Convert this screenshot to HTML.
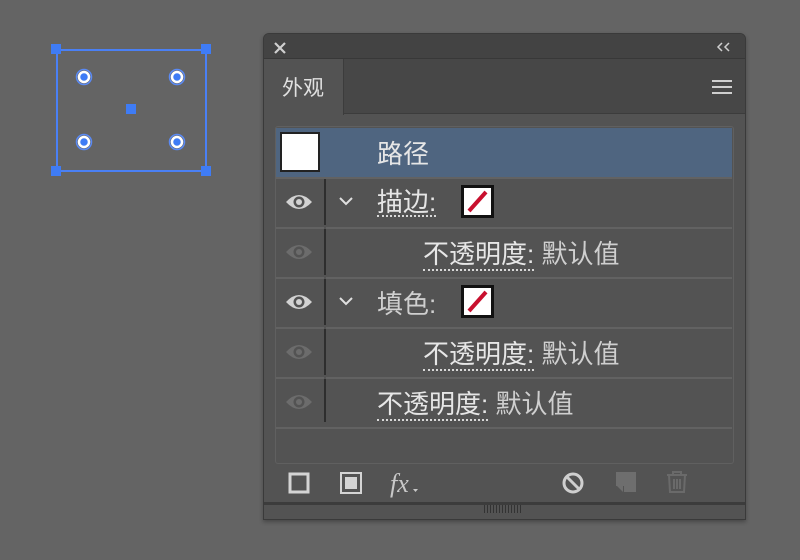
<!DOCTYPE html>
<html><head><meta charset="utf-8"><style>
*{margin:0;padding:0;box-sizing:border-box}
body{width:800px;height:560px;background:#646464;position:relative;overflow:hidden;font-family:"Liberation Sans","Noto Sans CJK SC",sans-serif}
.a{position:absolute}
.t{position:absolute;font-size:26px;color:#e6e6e6;line-height:30px;white-space:nowrap}
.u{border-bottom:2px dotted #d8d8d8;line-height:26px}
.v{color:#cfcfcf}
.row{position:absolute;left:276px;width:456px;height:50px;border-top:2px solid #626262}
.sw{position:absolute;left:461px;width:33px;height:33px;background:#111;padding:3px}
.sw div{width:27px;height:27px;background:#fff;position:relative;overflow:hidden}
</style></head><body>
<div class="a" style="left:56px;top:49px;width:151px;height:123px;border:2px solid #4a80f5"></div>
<div class="a" style="left:51px;top:44px;width:10px;height:10px;background:#3f7cf5"></div>
<div class="a" style="left:201px;top:44px;width:10px;height:10px;background:#3f7cf5"></div>
<div class="a" style="left:51px;top:166px;width:10px;height:10px;background:#3f7cf5"></div>
<div class="a" style="left:201px;top:166px;width:10px;height:10px;background:#3f7cf5"></div>
<div class="a" style="left:126px;top:104px;width:10px;height:10px;background:#3f7cf5"></div>
<svg class="a" style="left:0;top:0" width="230" height="180">
<g fill="none" stroke="#5a8af5" stroke-width="1.5"><circle cx="84" cy="77" r="7.5"/><circle cx="177" cy="77" r="7.5"/><circle cx="84" cy="142" r="7.5"/><circle cx="177" cy="142" r="7.5"/></g>
<g fill="#3f7cf5" stroke="#fff" stroke-width="2.5">
<circle cx="84" cy="77" r="5"/><circle cx="177" cy="77" r="5"/><circle cx="84" cy="142" r="5"/><circle cx="177" cy="142" r="5"/></g>
</svg>
<div class="a" style="left:263px;top:33px;width:483px;height:487px;background:#535353;border:1px solid #3a3a3a;border-radius:6px 6px 0 0;box-shadow:0 2px 4px rgba(0,0,0,.3)"></div>
<div class="a" style="left:264px;top:34px;width:481px;height:25px;background:#434343;border-radius:5px 5px 0 0;border-bottom:1px solid #383838"></div>
<svg class="a" style="left:273px;top:41px" width="14" height="14"><path d="M2 2L12 12M12 2L2 12" stroke="#cfcfcf" stroke-width="2.2"/></svg>
<svg class="a" style="left:714px;top:40px" width="20" height="14"><path d="M8 3L4 7L8 11M15 3L11 7L15 11" stroke="#cfcfcf" stroke-width="1.5" fill="none"/></svg>
<div class="a" style="left:264px;top:59px;width:481px;height:55px;background:#474747;border-bottom:1px solid #3c3c3c"></div>
<div class="a" style="left:264px;top:59px;width:80px;height:56px;background:#535353;border-right:1px solid #3c3c3c"></div>
<div class="t" style="left:282px;top:74px;font-size:21px;color:#e0e0e0">外观</div>
<div class="a" style="left:712px;top:80px;width:20px;height:2px;background:#cfcfcf;box-shadow:0 6px 0 #cfcfcf,0 12px 0 #cfcfcf"></div>
<div class="a" style="left:275px;top:126px;width:459px;height:338px;border:1px solid #606060;border-radius:3px;background:#535353"></div>
<div class="a" style="left:276px;top:128px;width:456px;height:49px;background:#4f6580"></div>
<div class="a" style="left:280px;top:132px;width:40px;height:40px;background:#fff;border:2px solid #222"></div>
<div class="t" style="left:377px;top:139px">路径</div>
<div class="row" style="top:177px"></div>
<div class="row" style="top:227px"></div>
<div class="row" style="top:277px"></div>
<div class="row" style="top:327px"></div>
<div class="row" style="top:377px"></div>
<div class="row" style="top:427px"></div>
<div class="a" style="left:324px;top:179px;width:2px;height:243px;background:#2e2e2e"></div>
<div class="a" style="left:324px;top:225px;width:2px;height:4px;background:#535353"></div>
<div class="a" style="left:324px;top:275px;width:2px;height:4px;background:#535353"></div>
<div class="a" style="left:324px;top:325px;width:2px;height:4px;background:#535353"></div>
<div class="a" style="left:324px;top:375px;width:2px;height:4px;background:#535353"></div>
<svg class="a" style="left:0;top:0" width="800" height="560">
<defs><g id="e"><path d="M-13 0Q0-14 13 0Q0 14-13 0Z"/><circle r="5.5" fill="#535353"/><circle r="3"/></g></defs>
<use href="#e" x="299" y="202" fill="#d2d2d2"/>
<use href="#e" x="299" y="252" fill="#6c6c6c"/>
<use href="#e" x="299" y="302" fill="#d2d2d2"/>
<use href="#e" x="299" y="352" fill="#6c6c6c"/>
<use href="#e" x="299" y="402" fill="#6c6c6c"/>
<path d="M340 198l6 6 6-6M340 298l6 6 6-6" stroke="#e0e0e0" stroke-width="2" fill="none"/>
</svg>
<div class="t u" style="left:377px;top:189px">描边:</div>
<div class="sw" style="top:185px"><div><svg width="27" height="27"><path d="M5 23L22 4" stroke="#c8102e" stroke-width="4"/></svg></div></div>
<div class="t" style="left:423px;top:239px"><span class="u">不透明度:</span> <span class="v">默认值</span></div>
<div class="t" style="left:377px;top:289px"><span class="v">填色:</span></div>
<div class="sw" style="top:285px"><div><svg width="27" height="27"><path d="M5 23L22 4" stroke="#c8102e" stroke-width="4"/></svg></div></div>
<div class="t" style="left:423px;top:339px"><span class="u">不透明度:</span> <span class="v">默认值</span></div>
<div class="t" style="left:377px;top:389px"><span class="u">不透明度:</span> <span class="v">默认值</span></div>
<svg class="a" style="left:0;top:0" width="800" height="560">
<rect x="290" y="474" width="18" height="18" fill="none" stroke="#d4d4d4" stroke-width="3"/>
<rect x="341" y="473" width="20" height="20" fill="none" stroke="#d4d4d4" stroke-width="2"/>
<rect x="345" y="477" width="12" height="12" fill="#d4d4d4"/>
<text x="390" y="492" font-family="Liberation Serif" font-style="italic" font-size="26" fill="#c8c8c8">fx</text>
<path d="M413 489h5l-2.5 3z" fill="#c8c8c8"/>
<circle cx="573" cy="483" r="9" fill="none" stroke="#cfcfcf" stroke-width="3"/>
<path d="M567 477l12 12" stroke="#cfcfcf" stroke-width="3"/>
<path d="M616 472h20v20h-12v-6h-8z" fill="#6e6e6e"/><path d="M617 486h6v6z" fill="#6e6e6e"/>
<g stroke="#6a6a6a" stroke-width="2" fill="none"><path d="M667 475h20M673 475v-3h8v3M669 475l1 17h14l1-17M674 479v10M677 479v10M680 479v10"/></g>
</svg>
<div class="a" style="left:264px;top:502px;width:481px;height:3px;background:#3c3c3c"></div>
<div class="a" style="left:484px;top:505px;width:38px;height:8px;background:repeating-linear-gradient(90deg,#333 0 1px,transparent 1px 3px)"></div>
</body></html>
